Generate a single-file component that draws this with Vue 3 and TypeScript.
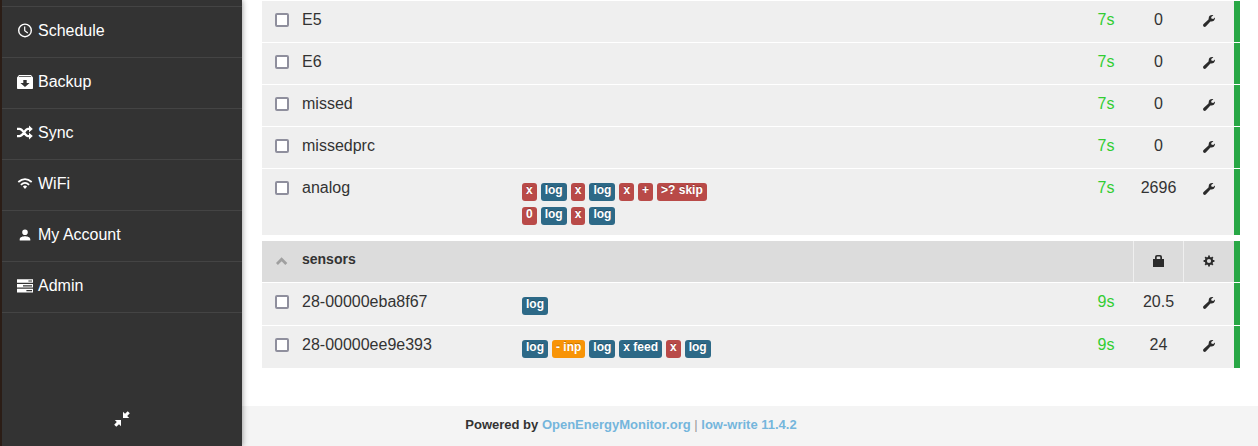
<script setup lang="ts">
type IconName = 'clock' | 'archive' | 'shuffle' | 'wifi' | 'user' | 'server'
type TagKind = 'red' | 'blue' | 'orange'

interface MenuItem {
  label: string
  icon: IconName
}

interface Tag {
  text: string
  kind: TagKind
}

interface InputRow {
  name: string
  process: Tag[][]
  updated: string
  value: string
}

interface Group {
  title: string
  inputs: InputRow[]
}

const menu: MenuItem[] = [
  { label: 'Schedule', icon: 'clock' },
  { label: 'Backup', icon: 'archive' },
  { label: 'Sync', icon: 'shuffle' },
  { label: 'WiFi', icon: 'wifi' },
  { label: 'My Account', icon: 'user' },
  { label: 'Admin', icon: 'server' },
]

const red = (text: string): Tag => ({ text, kind: 'red' })
const orange = (text: string): Tag => ({ text, kind: 'orange' })
const blue = (text: string): Tag => ({ text, kind: 'blue' })

const groups: Group[] = [
  {
    title: '',
    inputs: [
      { name: 'E5', process: [], updated: '7s', value: '0' },
      { name: 'E6', process: [], updated: '7s', value: '0' },
      { name: 'missed', process: [], updated: '7s', value: '0' },
      { name: 'missedprc', process: [], updated: '7s', value: '0' },
      {
        name: 'analog',
        process: [
          [red('x'), blue('log'), red('x'), blue('log'), red('x'), red('+'), red('>? skip')],
          [red('0'), blue('log'), red('x'), blue('log')],
        ],
        updated: '7s',
        value: '2696',
      },
    ],
  },
  {
    title: 'sensors',
    inputs: [
      { name: '28-00000eba8f67', process: [[blue('log')]], updated: '9s', value: '20.5' },
      {
        name: '28-00000ee9e393',
        process: [[blue('log'), orange('- inp'), blue('log'), blue('x feed'), red('x'), blue('log')]],
        updated: '9s',
        value: '24',
      },
    ],
  },
]
</script>

<template>
  <div class="layout">
    <aside class="sidebar">
      <nav>
        <ul class="menu">
          <li v-for="item in menu" :key="item.label">
            <a href="#">
              <svg class="menu-icon" viewBox="0 0 16 16" aria-hidden="true">
                <g v-if="item.icon === 'clock'" fill="none" stroke="currentColor">
                  <circle cx="8" cy="7.4" r="6.3" stroke-width="1.4" />
                  <path d="M7.7 3.6V7.8L10.8 10" stroke-width="1.2" />
                </g>
                <path
                  v-else-if="item.icon === 'archive'"
                  fill-rule="evenodd"
                  d="M2 1H14L16 3.4V14.2Q16 15 15.2 15H.8Q0 15 0 14.2V3.4ZM2.2 2.2L1.6 3H14.4L13.8 2.2ZM6.3 6V9H3.4L8 13L12.6 9H9.7V6Z"
                />
                <g v-else-if="item.icon === 'shuffle'">
                  <path
                    d="M0 3.9H2.4C6.4 3.9 7.6 11.1 11 11.1H13M0 11.1H2.4C6.4 11.1 7.6 3.9 11 3.9H13"
                    fill="none"
                    stroke="currentColor"
                    stroke-width="2.3"
                  />
                  <path d="M12 .6L15.8 3.9L12 7.2ZM12 7.8L15.8 11.1L12 14.4Z" />
                </g>
                <g v-else-if="item.icon === 'wifi'" fill="none" stroke="currentColor" stroke-width="1.8">
                  <path d="M1.3 6Q8 .2 14.7 6M3.9 8.8Q8 5 12.1 8.8" />
                  <path d="M5.9 10.5Q8 8.7 10.1 10.5L8 13Z" fill="currentColor" stroke="none" />
                </g>
                <path
                  v-else-if="item.icon === 'user'"
                  d="M8 2.4A2.8 2.8 0 0 1 8 8A2.8 2.8 0 0 1 8 2.4ZM2.7 13.6V12.2C2.7 10 6.2 9.2 8 9.2S13.3 10 13.3 12.2V13.6Z"
                />
                <path
                  v-else
                  fill-rule="evenodd"
                  d="M0 1.2H16V4.8H0ZM11.4 2.4V3.6H15V2.4ZM0 6H16V9.6H0ZM6 7.2V8.4H15V7.2ZM0 10.8H16V14.4H0ZM9.4 12V13.2H15V12Z"
                />
              </svg>
              <span>{{ item.label }}</span>
            </a>
          </li>
        </ul>
      </nav>
      <button class="collapse" type="button" aria-label="Collapse sidebar">
        <svg viewBox="0 0 16 16" aria-hidden="true">
          <path
            d="M9 0.8L11 2.8L13.7 .2L15.8 2.3L13.2 5L15.2 7H9ZM.8 9H7V15.2L5 13.2L2.3 15.8L.2 13.7L2.8 11Z"
          />
        </svg>
      </button>
    </aside>

    <main class="content">
      <table v-for="(group, g) in groups" :key="g" class="inputs">
        <colgroup>
          <col class="col-select" />
          <col class="col-name" />
          <col />
          <col class="col-time" />
          <col class="col-value" />
          <col class="col-action" />
        </colgroup>
        <thead v-if="group.title">
          <tr>
            <th class="select">
              <button class="icon-button" type="button" aria-label="Collapse group">
                <svg class="chevron" viewBox="0 0 12 12" aria-hidden="true">
                  <path d="M.9 9L5.6 4.3L10.3 9" fill="none" stroke="currentColor" stroke-width="2.8" />
                </svg>
              </button>
            </th>
            <th class="title" colspan="3" scope="colgroup">{{ group.title }}</th>
            <th class="tool">
              <button class="icon-button" type="button" aria-label="Device key">
                <svg viewBox="0 0 12 12" aria-hidden="true">
                  <path
                    fill-rule="evenodd"
                    d="M0 4H2V2Q2 0 4 0H7Q9 0 9 2V4H11V12H0ZM3.7 4H7.3V2.4Q7.3 1.6 6.5 1.6H4.5Q3.7 1.6 3.7 2.4Z"
                  />
                </svg>
              </button>
            </th>
            <th class="tool edge">
              <button class="icon-button" type="button" aria-label="Configure device">
                <svg viewBox="0 0 12 12" aria-hidden="true">
                  <circle cx="6" cy="6" r="3.1" fill="none" stroke="currentColor" stroke-width="2" />
                  <path
                    d="M6 .6V3M6 9V11.4M.6 6H3M9 6H11.4M2.2 2.2L3.8 3.8M8.2 8.2L9.8 9.8M2.2 9.8L3.8 8.2M8.2 3.8L9.8 2.2"
                    stroke="currentColor"
                    stroke-width="1.8"
                  />
                </svg>
              </button>
            </th>
          </tr>
        </thead>
        <tbody>
          <tr v-for="(row, r) in group.inputs" :key="row.name">
            <td class="select"><input :id="`input-${g}-${r}`" type="checkbox" /></td>
            <td><label :for="`input-${g}-${r}`">{{ row.name }}</label></td>
            <td class="process">
              <div v-for="(line, l) in row.process" :key="l" class="tags">
                <span v-for="(tag, t) in line" :key="t" class="tag" :class="tag.kind">{{ tag.text }}</span>
              </div>
            </td>
            <td class="time">{{ row.updated }}</td>
            <td class="value">{{ row.value }}</td>
            <td class="edge">
              <button class="icon-button" type="button" :aria-label="`Configure ${row.name}`">
                <svg viewBox="0 0 12 12" aria-hidden="true">
                  <path
                    d="M10.4 .3C8.2 -.4 5.7 .7 5.7 3.2L5.5 4.5L.6 8.9C-.2 9.7 0 10.8 .6 11.4C1.2 12.1 2.3 12 3 11.3L7.4 6.5C10 7 12.2 5.3 12 2.6L10.2 4L8.4 3.5L8.2 2Z"
                  />
                </svg>
              </button>
            </td>
          </tr>
        </tbody>
      </table>
    </main>

    <footer class="footer">
      Powered by <a href="#">OpenEnergyMonitor.org</a>
      <span class="divider"> | </span>
      <a href="#">low-write 11.4.2</a>
    </footer>
  </div>
</template>

<style>
body {
  margin: 0;
  background: #fff;
}
</style>

<style scoped>
.layout {
  display: grid;
  grid-template-columns: 242px minmax(0, 1fr);
  grid-template-rows: 1fr auto;
  min-height: 100vh;
  color: #333;
  font-family: "Liberation Sans", Arial, sans-serif;
  font-size: 16px;
  line-height: 20px;
}

.sidebar {
  grid-column: 1;
  grid-row: 1 / 3;
  z-index: 1;
  display: flex;
  flex-direction: column;
  box-sizing: border-box;
  padding: 6px 0 12px;
  border-left: 2px solid #2b1d16;
  background: #333;
  box-shadow: 0 0 6px rgba(0, 0, 0, 0.45);
}

.menu {
  margin: 0;
  padding: 0;
  border-top: 1px solid #444;
  list-style: none;
}

.menu li {
  border-bottom: 1px solid #444;
}

.menu a {
  display: flex;
  gap: 5px;
  padding: 14px 15px 16px;
  color: #fff;
  text-decoration: none;
}

.menu-icon {
  width: 16px;
  height: 16px;
  margin-top: 2px;
  fill: currentColor;
}

.collapse {
  display: flex;
  align-self: center;
  margin-top: auto;
  padding: 7px;
  border: 0;
  background: none;
  color: #fff;
}

.collapse svg {
  width: 16px;
  height: 16px;
  fill: currentColor;
}

.content {
  grid-column: 2;
  grid-row: 1;
  padding: 0 18px 20px 20px;
}

.inputs {
  width: 100%;
  margin-bottom: 4px;
  border-spacing: 0 1px;
  table-layout: fixed;
}

.col-select {
  width: 40px;
}

.col-name {
  width: 220px;
}

.col-time {
  width: 54px;
}

.col-value {
  width: 50px;
}

.col-action {
  width: 57px;
}

td,
th {
  padding: 9px 0 12px;
  background: #efefef;
  text-align: left;
  vertical-align: top;
}

th {
  background: #dcdcdc;
  font-size: 14px;
}

th.title {
  padding: 8px 0 13px;
}

.tool {
  border-left: 1px solid #efefef;
}

td.select {
  padding: 12px 13px 0;
}

td.select input {
  display: block;
  box-sizing: border-box;
  width: 14px;
  height: 14px;
  margin: 0;
  appearance: none;
  border: 2px solid #8f8f9d;
  border-radius: 2px;
  background: #fff;
}

td.process {
  padding: 0;
}

.tags {
  display: flex;
  gap: 4px;
  padding-top: 6px;
}

.tags:first-child {
  padding-top: 14px;
}

.tags:last-child {
  padding-bottom: 10px;
}

.tag {
  padding: 1px 4px 5px;
  border-radius: 3px;
  color: #fff;
  font-size: 12px;
  font-weight: bold;
  line-height: 12px;
  text-shadow: 0 -1px 0 rgba(0, 0, 0, 0.25);
  white-space: nowrap;
}

.red {
  background: #b94a48;
}

.blue {
  background: #2d6987;
}

.orange {
  background: #f89406;
}

td.time {
  color: #32cd32;
  text-align: center;
}

td.value {
  border-left: 1px solid #efefef;
  text-align: center;
}

.edge {
  border-right: 6px solid #28a745;
}

.icon-button {
  display: flex;
  justify-content: center;
  width: 100%;
  padding: 5px 0 3px;
  border: 0;
  background: none;
  color: #2b2b2b;
}

.icon-button svg {
  width: 12px;
  height: 12px;
  fill: currentColor;
}

.icon-button .chevron {
  color: #a0a0a0;
}

.footer {
  grid-column: 1 / 3;
  grid-row: 2;
  padding: 9px 0 11px 4px;
  background: #f4f4f4;
  font-size: 13px;
  font-weight: bold;
  text-align: center;
}

.footer a {
  color: #75b6dc;
  text-decoration: none;
}

.divider {
  color: #999;
  font-weight: normal;
}
</style>
